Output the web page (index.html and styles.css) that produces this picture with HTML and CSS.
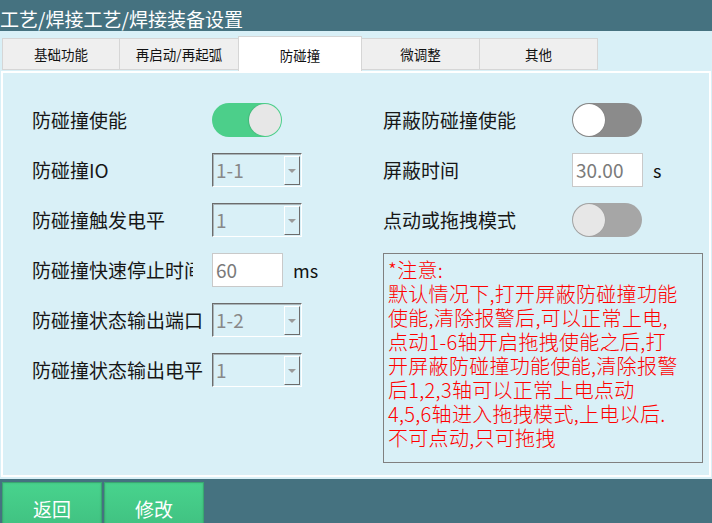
FILE: index.html
```html
<!DOCTYPE html>
<html lang="zh-CN">
<head>
<meta charset="utf-8">
<title>焊接装备设置</title>
<link rel="stylesheet" href="styles.css">
</head>
<body>
<div class="app">
  <header class="header">工艺/焊接工艺/焊接装备设置</header>
  <div class="main">
    <div class="tabs">
      <div class="tab t1">基础功能</div>
      <div class="tab t2">再启动/再起弧</div>
      <div class="tab active">防碰撞</div>
      <div class="tab t4">微调整</div>
      <div class="tab t5">其他</div>
    </div>
    <div class="panel">
      <div class="col left">
        <div class="row">
          <div class="label">防碰撞使能</div>
          <div class="toggle on"><span class="knob"></span></div>
        </div>
        <div class="row">
          <div class="label">防碰撞IO</div>
          <div class="select"><span class="val">1-1</span><span class="drop"><span class="tri"></span></span></div>
        </div>
        <div class="row">
          <div class="label">防碰撞触发电平</div>
          <div class="select"><span class="val">1</span><span class="drop"><span class="tri"></span></span></div>
        </div>
        <div class="row">
          <div class="label"><span class="clip">防碰撞快速停止时间</span></div>
          <div class="input">60</div>
          <div class="unit">ms</div>
        </div>
        <div class="row">
          <div class="label">防碰撞状态输出端口</div>
          <div class="select"><span class="val">1-2</span><span class="drop"><span class="tri"></span></span></div>
        </div>
        <div class="row">
          <div class="label">防碰撞状态输出电平</div>
          <div class="select"><span class="val">1</span><span class="drop"><span class="tri"></span></span></div>
        </div>
      </div>
      <div class="col right">
        <div class="row">
          <div class="label">屏蔽防碰撞使能</div>
          <div class="toggle off"><span class="knob"></span></div>
        </div>
        <div class="row">
          <div class="label">屏蔽时间</div>
          <div class="input">30.00</div>
          <div class="unit">s</div>
        </div>
        <div class="row">
          <div class="label">点动或拖拽模式</div>
          <div class="toggle disabled"><span class="knob"></span></div>
        </div>
        <div class="note">
          <div class="line">*注意:</div>
          <div class="line">默认情况下,打开屏蔽防碰撞功能</div>
          <div class="line">使能,清除报警后,可以正常上电,</div>
          <div class="line">点动1-6轴开启拖拽使能之后,打</div>
          <div class="line">开屏蔽防碰撞功能使能,清除报警</div>
          <div class="line">后1,2,3轴可以正常上电点动</div>
          <div class="line">4,5,6轴进入拖拽模式,上电以后.</div>
          <div class="line">不可点动,只可拖拽</div>
        </div>
      </div>
    </div>
  </div>
  <footer class="footer">
    <div class="btn">返回</div>
    <div class="btn">修改</div>
  </footer>
</div>
</body>
</html>
```

FILE: styles.css
```css
html, body {
  margin: 0;
  padding: 0;
}
body {
  width: 712px;
  height: 523px;
  overflow: hidden;
  background: #d9f0f7;
  font-family: "Noto Sans CJK SC", "Noto Sans", sans-serif;
}
.app {
  display: flex;
  flex-direction: column;
  width: 712px;
  height: 523px;
}
.header {
  box-sizing: border-box;
  height: 31px;
  background: #457280;
  color: #ffffff;
  font-size: 19px;
  line-height: 24px;
  padding-top: 7px;
  white-space: nowrap;
}
.main {
  background: #d9f0f7;
  height: 447px;
}
.tabs {
  display: flex;
  align-items: flex-end;
  height: 40px;
  padding-left: 2px;
}
.tab {
  box-sizing: border-box;
  height: 32px;
  margin-bottom: 1px;
  border: 1px solid #d6d6d6;
  background: #efefef;
  color: #111;
  font-size: 13.5px;
  display: flex;
  align-items: center;
  justify-content: center;
  white-space: nowrap;
}
.t1 { width: 118px; }
.t2 { width: 120px; margin-left: -1px; }
.active {
  width: 124px;
  margin-left: -1px;
  height: 35px;
  margin-bottom: 0;
  background: #ffffff;
  border-bottom: none;
  padding-top: 1px;
}
.t4 { width: 119px; margin-left: -1px; }
.t5 { width: 119px; margin-left: -1px; }

.panel {
  box-sizing: border-box;
  margin-left: 1px;
  width: 710px;
  height: 406px;
  border: 2px solid #ffffff;
  padding: 30px 0 0 29px;
  display: flex;
}
.col {
  display: flex;
  flex-direction: column;
  gap: 16px;
}
.left { width: 351px; }
.right { width: 320px; }
.row {
  display: flex;
  align-items: center;
  height: 34px;
}
.label {
  flex: 0 0 180px;
  font-size: 19px;
  line-height: 34px;
  color: #161616;
  white-space: nowrap;
}
.right .label { flex-basis: 189px; }
.clip {
  display: inline-block;
  max-width: 161px;
  overflow: hidden;
  vertical-align: top;
}
.toggle {
  box-sizing: border-box;
  width: 70px;
  height: 34px;
  border-radius: 17px;
  display: flex;
  align-items: center;
  padding: 0 1px;
}
.toggle .knob {
  width: 32px;
  height: 32px;
  border-radius: 50%;
}
.toggle.on {
  background: #4ccf8a;
  justify-content: flex-end;
}
.toggle.on .knob {
  background: #e7e7e7;
  box-shadow: -1px 0 1px rgba(0,0,0,0.12);
}
.toggle.off {
  background: #8b8b8b;
}
.toggle.off .knob {
  background: #ffffff;
  box-shadow: 0 0 1px rgba(0,0,0,0.35);
}
.toggle.disabled {
  background: #a6a6a6;
}
.toggle.disabled .knob {
  background: #e7e7e7;
  box-shadow: 0 0 1px rgba(0,0,0,0.2);
}
.select {
  box-sizing: border-box;
  width: 90px;
  height: 34px;
  border: 1px solid;
  border-color: #6c6c6c #ffffff #ffffff #6c6c6c;
  box-shadow: inset 1px 1px 0 #a9b4b8;
  display: flex;
  align-items: stretch;
  justify-content: space-between;
}
.select .val {
  font-size: 19px;
  line-height: 32px;
  color: #888888;
  padding-left: 3px;
}
.select .drop {
  box-sizing: border-box;
  width: 16px;
  margin: 2px 1px 1px 0;
  border: 1px solid;
  border-color: #ffffff #6c6c6c #6c6c6c #ffffff;
  display: flex;
  align-items: center;
  justify-content: center;
}
.tri {
  width: 0;
  height: 0;
  border-left: 4px solid transparent;
  border-right: 4px solid transparent;
  border-top: 4px solid #9a9a9a;
}
.input {
  box-sizing: border-box;
  width: 71px;
  height: 34px;
  background: #ffffff;
  border: 1px solid #c9c9c9;
  font-size: 19px;
  line-height: 32px;
  color: #7a7a7a;
  padding-left: 3px;
}
.unit {
  margin-left: 10px;
  font-size: 18px;
  color: #111;
  line-height: 34px;
}
.note {
  box-sizing: border-box;
  width: 320px;
  height: 210px;
  border: 1px solid #808080;
  padding: 4px 4px;
  color: #ff0000;
  font-size: 20px;
  font-weight: 300;
  white-space: nowrap;
}
.line {
  height: 24px;
  line-height: 24px;
  word-spacing: 2px;
  letter-spacing: 0.3px;
}
.footer {
  margin-top: 1px;
  flex: 1;
  background: #457280;
  display: flex;
  gap: 2px;
  padding: 3px 0 0 2px;
  overflow: hidden;
}
.btn {
  box-sizing: border-box;
  flex: 0 0 auto;
  width: 100px;
  height: 54px;
  background: linear-gradient(#48d38d, #3fbe7f);
  border: 1px solid #39a870;
  box-shadow: inset 0 0 2px rgba(0,0,0,0.15);
  color: #ffffff;
  font-size: 19px;
  line-height: 52px;
  text-align: center;
}
```
